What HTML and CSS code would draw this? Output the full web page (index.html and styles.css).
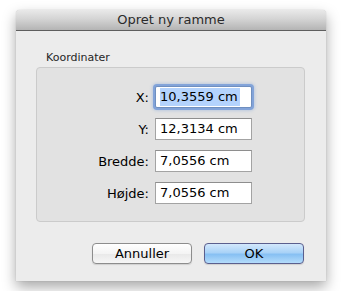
FILE: index.html
```html
<!DOCTYPE html>
<html lang="da">
<head>
    <meta charset="UTF-8">
    <title>Opret ny ramme</title>
    <link rel="stylesheet" href="styles.css">
</head>
<body>
    <div class="window">
        <div class="titlebar">Opret ny ramme</div>

        <div class="content">
            <div class="legend">Koordinater</div>
            <div class="group">
                <div class="row">
                    <span class="label">X:</span>
                    <div class="field focused"><span class="selected">10,3559 cm</span></div>
                </div>
                <div class="row">
                    <span class="label">Y:</span>
                    <div class="field">12,3134 cm</div>
                </div>
                <div class="row">
                    <span class="label">Bredde:</span>
                    <div class="field">7,0556 cm</div>
                </div>
                <div class="row">
                    <span class="label">Højde:</span>
                    <div class="field">7,0556 cm</div>
                </div>
            </div>

            <div class="buttons">
                <button class="btn">Annuller</button>
                <button class="btn default">OK</button>
            </div>
        </div>
    </div>
</body>
</html>
```

FILE: styles.css
```css
body {
    margin: 0;
    padding: 10px 16px;
    background: #ffffff;
    font-family: 'DejaVu Sans', 'Liberation Sans', sans-serif;
    font-size: 13px;
    color: #000;
}
.window {
    width: 310px;
    height: 271px;
    background: #ececec;
    border-radius: 4px 4px 0 0;
    box-shadow: 0 6px 14px rgba(0,0,0,0.35), 0 0 1px rgba(0,0,0,0.3);
    display: flex;
    flex-direction: column;
}
.titlebar {
    height: 20px;
    line-height: 20px;
    text-align: center;
    color: #2a2a2a;
    font-size: 13px;
    border-radius: 4px 4px 0 0;
    background: linear-gradient(#e9e9e9 0%, #d4d4d4 45%, #b4b4b4 100%);
    border-bottom: 1px solid #5e5e5e;
}
.content {
    padding: 20px 21px 17px 20px;
    display: flex;
    flex-direction: column;
}
.legend {
    font-size: 11px;
    line-height: 13px;
    color: #262626;
    margin-left: 10px;
    margin-bottom: 3px;
}
.group {
    height: 155px;
    box-sizing: border-box;
    background: #e2e2e2;
    border: 1px solid #cbcbcb;
    border-radius: 4px;
    padding-top: 18px;
    display: flex;
    flex-direction: column;
    gap: 10px;
}
.row {
    display: flex;
    align-items: center;
    height: 22px;
}
.label {
    width: 112px;
    text-align: right;
    margin-right: 6px;
}
.field {
    width: 97px;
    height: 22px;
    box-sizing: border-box;
    background: #fff;
    border: 1px solid #a3a3a3;
    border-top-color: #8e8e8e;
    padding: 0 4px;
    line-height: 20px;
    white-space: nowrap;
}
.focused {
    border-color: #6f8fbf;
    box-shadow: 0 0 0 2px rgba(110,150,215,0.75), 0 0 3px 3px rgba(120,160,220,0.35);
    border-radius: 2px;
}
.selected {
    background: #b4d3fd;
    display: inline-block;
    line-height: 18px;
    padding-right: 2px;
}
.buttons {
    display: flex;
    justify-content: flex-end;
    gap: 12px;
    margin-top: 21px;
    padding-right: 1px;
}
.btn {
    width: 100px;
    height: 21px;
    padding: 0;
    font-family: inherit;
    font-size: 13px;
    color: #000;
    border: 1px solid #8d8d8d;
    border-radius: 4px;
    background: linear-gradient(#ffffff 0%, #f4f4f4 50%, #e8e8e8 51%, #f6f6f6 100%);
    box-shadow: 0 1px 1px rgba(0,0,0,0.12);
}
.default {
    border-color: #5b5f8e;
    background: linear-gradient(#d3e8fc 0%, #a9d2f7 45%, #87c0f3 55%, #b4dcfb 100%);
}
```
